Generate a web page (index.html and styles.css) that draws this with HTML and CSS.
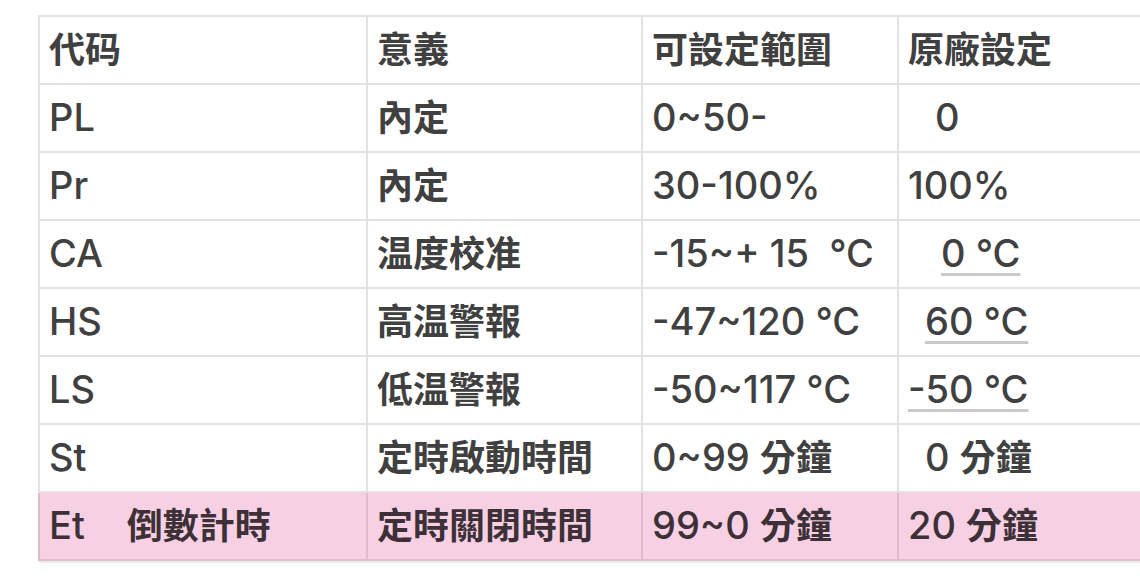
FILE: index.html
```html
<!DOCTYPE html>
<html lang="zh-Hant">
<head>
<meta charset="utf-8">
<title>參數設定表</title>
<link rel="stylesheet" href="styles.css">
</head>
<body>
<main class="page">
  <table class="settings">
    <colgroup>
      <col class="c-code"><col class="c-mean"><col class="c-range"><col class="c-default">
    </colgroup>
    <thead>
      <tr>
        <th><span class="zh">代码</span></th>
        <th><span class="zh">意義</span></th>
        <th><span class="zh">可設定範圍</span></th>
        <th><span class="zh">原廠設定</span></th>
      </tr>
    </thead>
    <tbody>
      <tr>
        <td>PL</td>
        <td><span class="zh">內定</span></td>
        <td>0~50-</td>
        <td><span class="ind-l">0</span></td>
      </tr>
      <tr>
        <td>Pr</td>
        <td><span class="zh">內定</span></td>
        <td>30-100%</td>
        <td>100%</td>
      </tr>
      <tr>
        <td>CA</td>
        <td><span class="zh">温度校准</span></td>
        <td>-15~+ 15  °C</td>
        <td><span class="ind-xl"><span class="mark">0 °C</span></span></td>
      </tr>
      <tr>
        <td>HS</td>
        <td><span class="zh">高温警報</span></td>
        <td>-47~120 °C</td>
        <td><span class="ind-s"><span class="mark">60 °C</span></span></td>
      </tr>
      <tr>
        <td>LS</td>
        <td><span class="zh">低温警報</span></td>
        <td>-50~117 °C</td>
        <td><span class="mark">-50 °C</span></td>
      </tr>
      <tr>
        <td>St</td>
        <td><span class="zh">定時啟動時間</span></td>
        <td>0~99 <span class="zh">分鐘</span></td>
        <td><span class="ind-s">0 <span class="zh">分鐘</span></span></td>
      </tr>
      <tr class="hl">
        <td>Et<span class="gap"></span><span class="zh">倒數計時</span></td>
        <td><span class="zh">定時關閉時間</span></td>
        <td>99~0 <span class="zh">分鐘</span></td>
        <td>20 <span class="zh">分鐘</span></td>
      </tr>
    </tbody>
  </table>
</main>
</body>
</html>
```

FILE: styles.css
```css
html, body {
  margin: 0;
  padding: 0;
  background: #ffffff;
}

body {
  width: 1140px;
  height: 586px;
  overflow: hidden;
}

.page {
  padding: 15px 0 0 38px;
}

.settings {
  border-collapse: collapse;
  table-layout: fixed;
  width: 1120px;
  font-family: "Inter", "Liberation Sans", "Noto Sans CJK TC", sans-serif;
  font-size: 38px;
  font-weight: 500;
  color: #404040;
  box-shadow: 0 3px 0 -1px #ececec;
}

.c-code { width: 328px; }
.c-mean { width: 275px; }
.c-range { width: 256px; }
.c-default { width: 261px; }

.settings th,
.settings td {
  border: 2px solid #e2e2e2;
  height: 68px;
  padding: 0 9px 3px;
  text-align: left;
  vertical-align: middle;
  white-space: pre;
  box-sizing: border-box;
  line-height: 1;
}

.settings th {
  font-weight: 700;
}

.zh {
  font-family: "Noto Sans CJK TC", sans-serif;
  font-size: 36px;
  font-weight: 700;
}

.ind-s { padding-left: 17px; }
.ind-l { padding-left: 27px; }
.ind-xl { padding-left: 33px; }

.mark {
  text-decoration: underline;
  text-decoration-color: #c9c9c9;
  text-decoration-thickness: 3px;
  text-underline-offset: 6px;
}

.gap {
  display: inline-block;
  width: 42px;
}

.hl td {
  background: #f7d1e3;
  color: #3d3037;
  border-color: #dfbccc;
}
```
